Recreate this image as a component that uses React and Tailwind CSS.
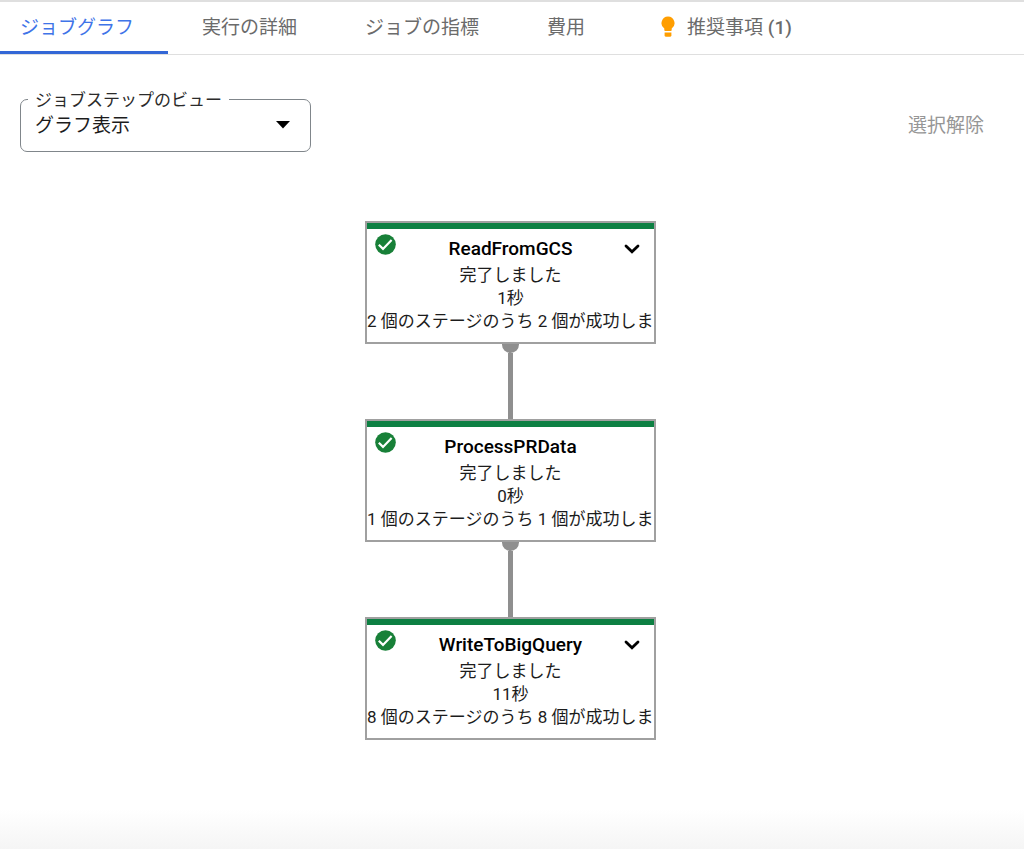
import { useState } from "react";
import clsx from "clsx";

const tabs = [
  { id: "graph", label: "ジョブグラフ" },
  { id: "details", label: "実行の詳細" },
  { id: "metrics", label: "ジョブの指標" },
  { id: "cost", label: "費用" },
  { id: "recommendations", label: "推奨事項", count: 1 },
];

const steps = [
  { name: "ReadFromGCS", status: "完了しました", time: "1秒", stages: 2, expandable: true },
  { name: "ProcessPRData", status: "完了しました", time: "0秒", stages: 1, expandable: false },
  { name: "WriteToBigQuery", status: "完了しました", time: "11秒", stages: 8, expandable: true },
];

function BulbIcon() {
  return (
    <svg viewBox="0 0 14 22" className="h-[22px] w-[14px] shrink-0" fill="#ff9e00" aria-hidden="true">
      <path d="M7 0.5a6.6 6.6 0 0 0-3.7 12v1.6q0 .9.9.9h5.6q.9 0 .9-.9v-1.6A6.6 6.6 0 0 0 7 .5z" />
      <path d="M3.6 16.6h6.8v2.6q0 1.6-1.6 1.6H5.2q-1.6 0-1.6-1.6z" />
    </svg>
  );
}

function CheckIcon() {
  return (
    <svg viewBox="0 0 21 21" className="h-[21px] w-[21px]" aria-hidden="true">
      <circle cx="10.5" cy="10.5" r="10.3" fill="#188038" />
      <path d="M3.8 10.8l4.2 4.1 8.6-8.8" fill="none" stroke="#fff" strokeWidth="2.2" />
    </svg>
  );
}

function ChevronIcon() {
  return (
    <svg viewBox="0 0 16 10" className="h-[10px] w-4" aria-hidden="true">
      <path
        d="M2 2l6 5.8L14 2"
        fill="none"
        stroke="#000"
        strokeWidth="2.8"
        strokeLinecap="round"
        strokeLinejoin="miter"
      />
    </svg>
  );
}

function TabBar({ active, onChange }) {
  return (
    <nav role="tablist" className="flex h-[55px] border-t-2 border-b border-[#dfdfdf]">
      {tabs.map((tab, i) => (
        <button
          key={tab.id}
          role="tab"
          aria-selected={active === tab.id}
          onClick={() => onChange(tab.id)}
          className={clsx(
            "flex items-center gap-3 border-b-3 pr-[34px] text-[19px] whitespace-nowrap",
            i === 0 ? "pl-5" : "pl-[34px]",
            active === tab.id ? "border-[#3367d6] text-[#3f74e8]" : "border-transparent text-[#6b6b6b]"
          )}
        >
          {tab.count && (
            <span className="pl-2">
              <BulbIcon />
            </span>
          )}
          <span className="pt-1">
            {tab.label}
            {tab.count && <span className="font-medium"> ({tab.count})</span>}
          </span>
        </button>
      ))}
    </nav>
  );
}

function StepCard({ step }) {
  return (
    <article className="relative h-[123px] w-[291px] overflow-hidden border-2 border-[#a0a0a0] bg-white text-center text-[17px] leading-[23px] text-[#1c1c1c]">
      <div className="h-[6px] bg-[#0d8043]" />
      <span className="absolute top-[11px] left-2">
        <CheckIcon />
      </span>
      <h2 className="pt-2 text-[19px] leading-[24px] font-medium text-black">{step.name}</h2>
      <p className="pt-[3px]">{step.status}</p>
      <p>{step.time}</p>
      <p className="text-left whitespace-nowrap">
        {step.stages} 個のステージのうち {step.stages} 個が成功しました
      </p>
      {step.expandable && (
        <button aria-label={`${step.name} を展開`} className="absolute top-[21px] right-[14px]">
          <ChevronIcon />
        </button>
      )}
    </article>
  );
}

function Connector() {
  return (
    <div className="flex flex-col items-center">
      <div className="h-[9px] w-[17px] rounded-b-full bg-[#8f8f8f]" />
      <div className="h-[66px] w-[5px] bg-[#8f8f8f]" />
    </div>
  );
}

export default function App() {
  const [active, setActive] = useState("graph");
  const [view, setView] = useState("graph");

  return (
    <div
      lang="ja"
      className="flex min-h-screen flex-col bg-white font-[Roboto,'Noto_Sans_CJK_JP',sans-serif]"
    >
      <TabBar active={active} onChange={setActive} />

      <div className="flex items-start justify-between pt-[33px] pr-10 pl-5">
        <fieldset className="h-[64px] w-[291px] rounded-[7px] border border-[#80868b] pl-[7px]">
          <legend className="px-[7px] pt-[2px] text-[17px] leading-[20px] text-[#2b2b2b]">
            <label htmlFor="step-view">ジョブステップのビュー</label>
          </legend>
          <div className="flex items-center pr-5">
            <select
              id="step-view"
              value={view}
              onChange={(e) => setView(e.target.value)}
              className="flex-1 appearance-none bg-transparent pt-[2px] pl-[7px] text-[19px] leading-[28px] text-[#1c1c1c]"
            >
              <option value="graph">グラフ表示</option>
              <option value="table">表形式</option>
            </select>
            <svg viewBox="0 0 14 8" className="h-2 w-[14px]" aria-hidden="true">
              <path d="M0 0h14L7 7.5z" />
            </svg>
          </div>
        </fieldset>
        <button disabled className="pt-6 text-[19px] leading-[28px] text-[#969696]">
          選択解除
        </button>
      </div>

      <main className="flex flex-1 flex-col items-center pt-[69px] pr-[3px]">
        {steps.map((step, i) => (
          <div key={step.name} className="flex flex-col items-center">
            {i > 0 && <Connector />}
            <StepCard step={step} />
          </div>
        ))}
      </main>

      <div className="h-10 bg-linear-to-b from-white to-[#f5f5f5]" />
    </div>
  );
}
